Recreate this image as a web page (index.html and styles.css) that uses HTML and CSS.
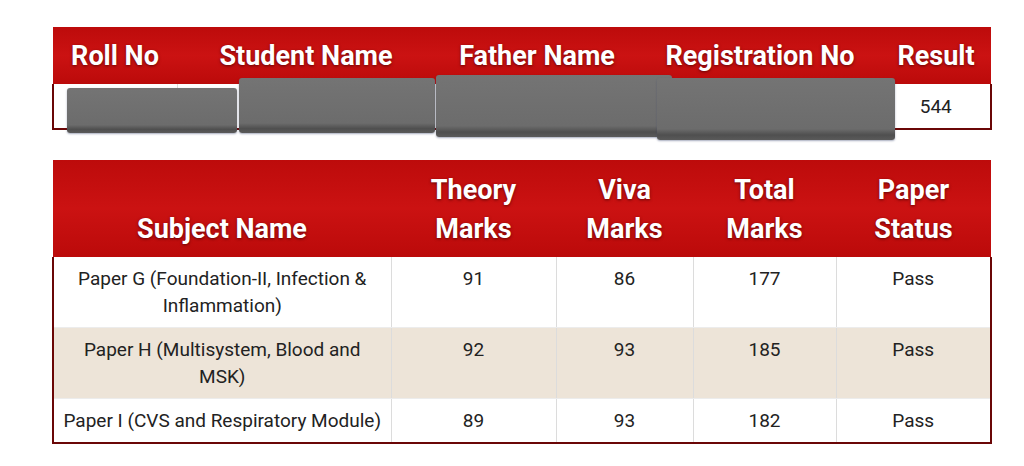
FILE: index.html
```html
<!DOCTYPE html>
<html>
<head>
<meta charset="utf-8">
<link rel="stylesheet" href="styles.css">
</head>
<body>
<div class="page">
  <div class="info-wrap">
    <table class="grid info">
      <colgroup>
        <col class="c-roll"><col class="c-student"><col class="c-father"><col class="c-reg"><col class="c-result">
      </colgroup>
      <thead>
        <tr><th>Roll No</th><th>Student Name</th><th>Father Name</th><th>Registration No</th><th>Result</th></tr>
      </thead>
      <tbody>
        <tr><td></td><td></td><td></td><td></td><td>544</td></tr>
      </tbody>
    </table>
    <div class="redact r1"></div>
    <div class="redact r2"></div>
    <div class="redact r3"></div>
    <div class="redact r4"></div>
  </div>

  <table class="grid marks">
    <colgroup>
      <col class="c-subject"><col class="c-theory"><col class="c-viva"><col class="c-total"><col class="c-status">
    </colgroup>
    <thead>
      <tr><th>Subject Name</th><th>Theory<br>Marks</th><th>Viva<br>Marks</th><th>Total<br>Marks</th><th>Paper<br>Status</th></tr>
    </thead>
    <tbody>
      <tr><td>Paper G (Foundation-II, Infection &amp;<br>Inflammation)</td><td>91</td><td>86</td><td>177</td><td>Pass</td></tr>
      <tr class="alt"><td>Paper H (Multisystem, Blood and<br>MSK)</td><td>92</td><td>93</td><td>185</td><td>Pass</td></tr>
      <tr><td>Paper I (CVS and Respiratory Module)</td><td>89</td><td>93</td><td>182</td><td>Pass</td></tr>
    </tbody>
  </table>
</div>
</body>
</html>
```
FILE: styles.css
```css
html, body {
  margin: 0;
  padding: 0;
  background: #fff;
}
body {
  font-family: Roboto, "Liberation Sans", sans-serif;
  color: #222;
}
.page {
  padding: 27px 0 0 52px;
  width: 938px;
}
.info-wrap {
  position: relative;
}
.grid {
  width: 938px;
  border-collapse: collapse;
  table-layout: fixed;
}
.grid th {
  background: linear-gradient(#bd0b0b, #cb1212 50%, #bb0a0a);
  color: #fff;
  font-size: 27px;
  font-weight: 700;
  line-height: 39px;
  text-align: center;
  text-shadow: 0 1px 3px rgba(60, 0, 0, 0.7);
  padding: 10px 0 8px;
  vertical-align: bottom;
  white-space: nowrap;
}
.grid td {
  font-size: 19px;
  line-height: 27px;
  text-align: center;
  vertical-align: top;
  padding: 8px 0;
  border-left: 1px solid #dcdcdc;
  border-right: 1px solid #dcdcdc;
  border-bottom: 1px solid #ececec;
  background: #fff;
}
.grid td:first-child {
  border-left: 2px solid #6a0606;
}
.grid td:last-child {
  border-right: 2px solid #6a0606;
}
.grid tbody tr:last-child td {
  border-bottom: 2px solid #6a0606;
}
.info td {
  padding: 9px 0 8px;
}
.c-roll { width: 124px; }
.c-student { width: 258px; }
.c-father { width: 204px; }
.c-reg { width: 242px; }
.c-result { width: 110px; }

.marks {
  margin-top: 30px;
}
.marks th {
  padding: 11px 0 8px;
}
.c-subject { width: 338px; }
.c-theory { width: 165px; }
.c-viva { width: 137px; }
.c-total { width: 143px; }
.c-status { width: 155px; }
.marks tr.alt td {
  background: #ede4d8;
}

.redact {
  position: absolute;
  background: linear-gradient(#747474, #6c6c6c 82%, #4f4f4f 92%, #5a5a5a);
  border-radius: 3px;
  box-shadow: 0 1px 2px rgba(60, 70, 110, 0.45);
}
.r1 { left: 15px; top: 61px; width: 170px; height: 45px; }
.r2 { left: 187px; top: 51px; width: 196px; height: 55px; }
.r3 { left: 384px; top: 48px; width: 236px; height: 62px; }
.r4 { left: 605px; top: 51px; width: 238px; height: 62px; }
```
